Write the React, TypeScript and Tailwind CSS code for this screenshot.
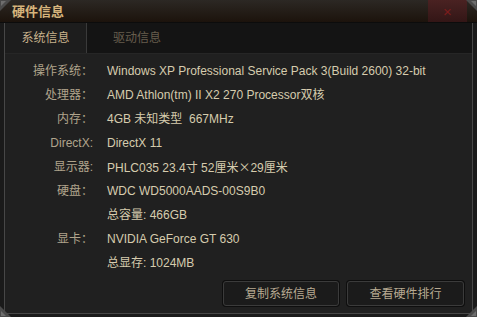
import React from "react";

const cjk = '"Noto Sans CJK SC", sans-serif';

const rows: { label: string; value: React.ReactNode }[] = [
  { label: "操作系统：", value: "Windows XP Professional Service Pack 3(Build 2600) 32-bit" },
  { label: "处理器：", value: "AMD Athlon(tm) II X2 270 Processor双核" },
  { label: "内存：", value: "4GB 未知类型  667MHz" },
  { label: "DirectX:", value: "DirectX 11" },
  {
    label: "显示器:",
    value: (
      <>
        PHLC035 23.4寸 52厘米<span style={{ fontFamily: cjk }}>×</span>29厘米
      </>
    ),
  },
  { label: "硬盘：", value: "WDC WD5000AADS-00S9B0" },
  { label: "", value: "总容量: 466GB" },
  { label: "显卡：", value: "NVIDIA GeForce GT 630" },
  { label: "", value: "总显存: 1024MB" },
];

function Corner({ className }: { className: string }) {
  return (
    <svg width="11" height="11" viewBox="0 0 11 11" className={"absolute " + className}>
      <path d="M0 0 L11 0 L0 11 Z" fill="#4a4a4a" />
      <path d="M1 1 L6 1 L1 6 Z" fill="#6e6e6e" />
    </svg>
  );
}

export default function App() {
  return (
    <div
      className="relative w-[477px] h-[317px] bg-[#1a1a1a] flex flex-col overflow-hidden"
      style={{ fontFamily: '"Liberation Sans", "Noto Sans CJK SC", sans-serif' }}
    >
      {/* Title bar */}
      <div className="h-[23px] flex items-center justify-between bg-gradient-to-b from-[#2c2824] to-[#1c130c] border-b border-[#0c0c0c]">
        <span className="pl-[12px] text-[13px] font-bold text-[#d6b47c] leading-none">硬件信息</span>
        <div className="w-[39px] h-[22px] mr-[10px] self-start flex items-center justify-center bg-gradient-to-b from-[#4a2222] to-[#331616]">
          <span className="text-[15px] leading-none text-[#7c1c1c]">×</span>
        </div>
      </div>

      <div className="flex-1 flex flex-col mx-[4px] border-x border-[#474747]">
        {/* Tabs */}
        <div className="h-[31px] flex bg-[#141414] border-b border-[#262626]">
          <div className="w-[82px] flex items-center justify-center bg-[#1d1d1d] border-r border-[#3a3a3a] text-[12px] text-[#c8b28c]">
            系统信息
          </div>
          <div className="w-[100px] flex items-center justify-center text-[12px] text-[#675d4d]">驱动信息</div>
        </div>

        {/* Content */}
        <div className="flex-1 bg-[#202020] pt-[5px] flex flex-col">
          {rows.map((r, i) => (
            <div key={i} className="h-[24px] flex items-center text-[12px]">
              <span className="w-[88px] text-right text-[#b0a48c] whitespace-pre">{r.label}</span>
              <span className="ml-[14px] text-[#d6ccae] whitespace-pre">{r.value}</span>
            </div>
          ))}
          <div className="flex justify-end gap-[8px] mt-[6px] pr-[8px]">
            <button className="w-[116px] h-[25px] rounded-[3px] bg-[#1b1b1b] border border-[#3b3b3b] shadow-[0_0_0_1px_#0e0e0e] text-[12px] text-[#b8aa92]">
              复制系统信息
            </button>
            <button className="w-[117px] h-[25px] rounded-[3px] bg-[#1b1b1b] border border-[#3b3b3b] shadow-[0_0_0_1px_#0e0e0e] text-[12px] text-[#b8aa92]">
              查看硬件排行
            </button>
          </div>
        </div>
      </div>
      <div className="h-[4px] border-t border-[#474747] bg-[#1a1a1a]" />

      <Corner className="left-0 top-0" />
      <Corner className="right-0 top-0 rotate-90" />
      <Corner className="left-0 bottom-0 -rotate-90" />
      <Corner className="right-0 bottom-0 rotate-180" />
    </div>
  );
}
